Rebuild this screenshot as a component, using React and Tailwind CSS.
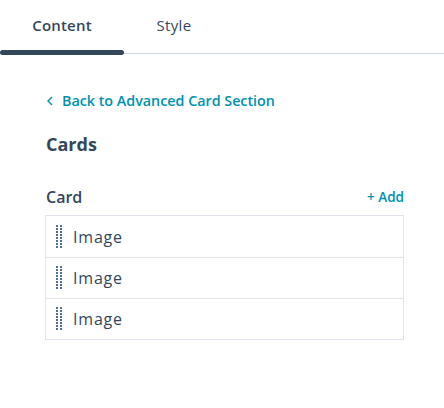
import React from "react";

const font = { fontFamily: '"Open Sans", "Noto Sans", sans-serif' };

const Handle = () => (
  <svg width="7" height="24" viewBox="0 0 7 24" className="shrink-0">
    {Array.from({ length: 8 }).map((_, i) => (
      <g key={i} fill="#516f90">
        <rect x="0" y={i * 3} width="2" height="2" />
        <rect x="4" y={i * 3} width="2" height="2" />
      </g>
    ))}
  </svg>
);

const App = () => {
  const rows = ["Image", "Image", "Image"];
  return (
    <div className="w-[444px] h-[408px] bg-white text-[#33475b]" style={font}>
      <div className="relative flex h-[54px] border-b border-[#cbd6e2]">
        <div className="relative w-[124px] flex items-center justify-center pb-[2px] text-[15px] font-semibold tracking-[0.2px]">
          Content
          <div className="absolute left-0 right-0 bottom-[-2px] h-[5px] rounded-full bg-[#33475b]" />
        </div>
        <div className="w-[100px] flex items-center justify-center pb-[2px] text-[15px] tracking-[0.3px]">Style</div>
      </div>

      <div className="pl-[45px] pr-[40px] pt-[39px]">
        <div className="flex items-center gap-[9px] text-[#0091ae] text-[14.3px] font-semibold h-[16px]">
          <svg width="6" height="10" viewBox="0 0 6 10" className="ml-[2px]">
            <path d="M5 1 L1 5 L5 9" fill="none" stroke="#0091ae" strokeWidth="1.4" />
          </svg>
          <span>Back to Advanced Card Section</span>
        </div>

        <div className="mt-[23px] text-[18px] font-bold leading-[24px] pl-[1px]">Cards</div>

        <div className="mt-[30px] flex items-center justify-between h-[22px]">
          <span className="text-[16px] font-semibold pl-[1px]">Card</span>
          <span className="text-[13.5px] font-semibold text-[#0091ae]">+ Add</span>
        </div>

        <div className="mt-[7px] border border-[#dfe3eb]">
          {rows.map((r, i) => (
            <div
              key={i}
              className={`flex items-center gap-[10px] h-[41px] pl-[10px] ${i > 0 ? "border-t border-[#dfe3eb]" : ""}`}
            >
              <Handle />
              <span className="text-[16px] tracking-[0.8px] leading-none">{r}</span>
            </div>
          ))}
        </div>
      </div>
    </div>
  );
};

export default App;
